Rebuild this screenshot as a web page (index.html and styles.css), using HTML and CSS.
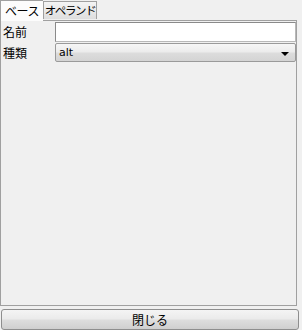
FILE: index.html
```html
<!DOCTYPE html>
<html lang="ja">
<head>
    <meta charset="UTF-8">
    <title>プロパティ</title>
    <link rel="stylesheet" href="styles.css">
</head>
<body>
    <div class="window">
        <div class="tabs">
            <div class="tab active">ベース</div>
            <div class="tab">オペランド</div>
        </div>
        <div class="panel">
            <div class="form">
                <label class="label">名前</label>
                <input class="text-input" type="text" value="">
                <label class="label">種類</label>
                <div class="select">
                    <span class="select-value">alt</span>
                    <span class="arrow"></span>
                </div>
            </div>
        </div>
        <button class="btn-close">閉じる</button>
    </div>
</body>
</html>
```

FILE: styles.css
```css
* {
    margin: 0;
    padding: 0;
    box-sizing: border-box;
}

body {
    background: #f0f0f0;
    font-family: "Noto Sans CJK JP", "DejaVu Sans", sans-serif;
    font-size: 12px;
    color: #000;
    width: 302px;
    height: 330px;
    overflow: hidden;
}

.window {
    display: flex;
    flex-direction: column;
    width: 299px;
}

.tabs {
    display: flex;
    align-items: flex-end;
    height: 20px;
    position: relative;
    z-index: 1;
}

.tab {
    height: 18px;
    width: 54px;
    margin-bottom: 1px;
    border: 1px solid #a0a0a0;
    border-bottom: none;
    background: linear-gradient(#f4f4f4, #dedede);
    line-height: 16px;
    font-size: 11.5px;
    letter-spacing: -1.4px;
    text-align: center;
    white-space: nowrap;
}

.tab.active {
    height: 21px;
    width: 43px;
    margin-bottom: -1px;
    background: #fcfcfc;
    padding-top: 1px;
    line-height: 17px;
    font-size: 12px;
    letter-spacing: -0.5px;
    border-right: none;
}

.panel {
    width: 297px;
    height: 286px;
    border: 1px solid #a0a0a0;
    background: #f0f0f0;
    padding: 1px 0 0 1px;
}

.form {
    display: grid;
    grid-template-columns: 53px 1fr;
    row-gap: 1px;
    align-items: center;
}

.label {
    font-size: 12px;
    line-height: 18px;
    padding-left: 1px;
}

.text-input {
    height: 20px;
    width: 241px;
    border: 1px solid #8f8f8f;
    border-color: #8a8a8a #b8b8b8 #b8b8b8 #8a8a8a;
    background: #fff;
    outline: none;
}

.select {
    height: 19px;
    width: 241px;
    border: 1px solid #9a9a9a;
    border-radius: 2px;
    background: linear-gradient(#f6f6f6 0%, #ececec 45%, #dcdcdc 55%, #d4d4d4 100%);
    display: flex;
    align-items: center;
    justify-content: space-between;
    padding: 0 6px 0 3px;
}

.select-value {
    font-family: "DejaVu Sans", sans-serif;
    font-size: 11px;
    line-height: 17px;
}

.arrow {
    width: 0;
    height: 0;
    border-left: 4px solid transparent;
    border-right: 4px solid transparent;
    border-top: 4px solid #000;
    margin-top: 2px;
}

.btn-close {
    margin: 3px 0 0 1px;
    width: 298px;
    height: 21px;
    border: 1px solid #8e8e8e;
    border-radius: 3px;
    background: linear-gradient(#f4f4f4 0%, #ebebeb 45%, #dddddd 55%, #cfcfcf 100%);
    font-family: "Noto Sans CJK JP", sans-serif;
    font-size: 12px;
    line-height: 17px;
    color: #000;
}
```
